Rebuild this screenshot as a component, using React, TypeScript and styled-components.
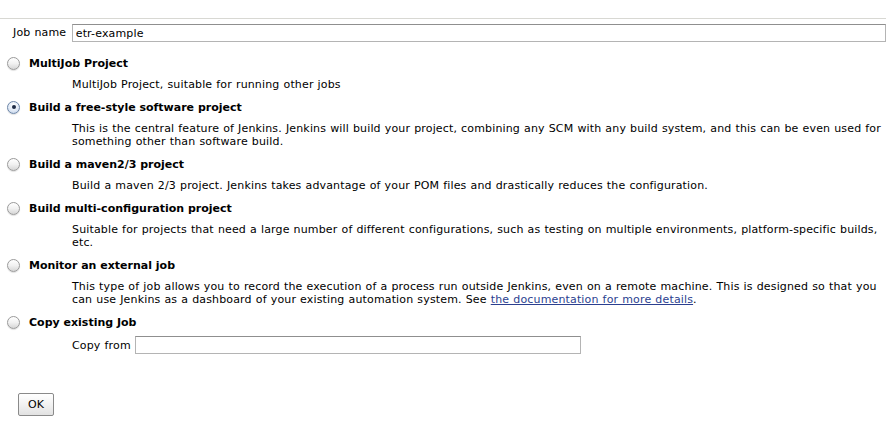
import React from "react";
import styled, { createGlobalStyle } from "styled-components";

const Global = createGlobalStyle`
	html, body {
		margin: 0;
		padding: 0;
		background: #fff;
	}
	body {
		font-family: "DejaVu Sans", Verdana, sans-serif;
		font-size: 11px;
		letter-spacing: 0.15px;
		word-spacing: 0.4px;
		color: #000;
	}
`;

const Form = styled.form`
	margin-top: 18px;
	border-top: 1px solid #d8d8d3;
	width: 100%;
	overflow: hidden;
`;

const NameRow = styled.div`
	display: flex;
	align-items: flex-start;
	margin-top: 5px;
`;

const NameLabel = styled.label`
	width: 72px;
	box-sizing: border-box;
	padding-left: 13px;
	padding-top: 2px;
	line-height: 13px;
`;

const TextInput = styled.input<{ $width?: number }>`
	box-sizing: border-box;
	height: 18px;
	width: ${(p) => (p.$width ? `${p.$width}px` : "calc(100% - 72px + 4px)")};
	margin: 0;
	padding: 0 3px;
	border: 1px solid #b4b4b4;
	border-top-color: #8f8f8f;
	font-family: inherit;
	font-size: 11px;
	letter-spacing: 0.15px;
	color: #000;
	outline: none;
	background: #fff;
`;

const Options = styled.div`
	display: flex;
	flex-direction: column;
	margin-top: 14px;
`;

const Option = styled.div`
	display: flex;
	flex-direction: column;
	margin-bottom: 9px;
`;

const OptionHead = styled.label`
	display: flex;
	align-items: center;
	height: 14px;
	padding-left: 7px;
	font-weight: bold;
	letter-spacing: 0;
	word-spacing: 0;
`;

const Radio = styled.span<{ $checked?: boolean }>`
	position: relative;
	box-sizing: border-box;
	width: 13px;
	height: 13px;
	margin-right: 9px;
	border-radius: 50%;
	border: 1px solid ${(p) => (p.$checked ? "#6d86a8" : "#9a9a9a")};
	background: ${(p) =>
		p.$checked
			? "radial-gradient(circle at 50% 30%, #ffffff 0%, #dfe8f5 60%, #b9cbe4 100%)"
			: "linear-gradient(#ffffff 0%, #f1f1f1 50%, #d6d6d6 100%)"};
	box-shadow: 0 1px 1px rgba(0, 0, 0, 0.12);

	&::after {
		content: "";
		display: ${(p) => (p.$checked ? "block" : "none")};
		position: absolute;
		left: 50%;
		top: 50%;
		width: 4px;
		height: 4px;
		margin: -2px 0 0 -2px;
		border-radius: 50%;
		background: #1d2b45;
	}
`;

const Description = styled.div`
	margin-top: 8px;
	padding-left: 72px;
	line-height: 13px;
`;

const DocLink = styled.a`
	color: #2b3f8f;
	text-decoration: underline;
`;

const CopyRow = styled.div`
	display: flex;
	align-items: center;
	gap: 4px;
	margin-top: 7px;
	padding-left: 72px;
`;

const Actions = styled.div`
	margin-top: 30px;
	padding-left: 18px;
`;

const OkButton = styled.button`
	box-sizing: border-box;
	width: 36px;
	height: 23px;
	padding: 0;
	border: 1px solid #8a8a8a;
	border-radius: 2px;
	background: linear-gradient(#ffffff 0%, #f2f2f2 50%, #e2e2e2 100%);
	font-family: inherit;
	font-size: 11px;
	color: #000;
`;

type JobType = {
	title: string;
	checked?: boolean;
	body?: React.ReactNode;
};

const types: JobType[] = [
	{ title: "MultiJob Project", body: "MultiJob Project, suitable for running other jobs" },
	{
		title: "Build a free-style software project",
		checked: true,
		body: "This is the central feature of Jenkins. Jenkins will build your project, combining any SCM with any build system, and this can be even used for something other than software build.",
	},
	{
		title: "Build a maven2/3 project",
		body: "Build a maven 2/3 project. Jenkins takes advantage of your POM files and drastically reduces the configuration.",
	},
	{
		title: "Build multi-configuration project",
		body: "Suitable for projects that need a large number of different configurations, such as testing on multiple environments, platform-specific builds, etc.",
	},
	{
		title: "Monitor an external job",
		body: (
			<>
				This type of job allows you to record the execution of a process run outside Jenkins, even on a remote machine. This is
				designed so that you can use Jenkins as a dashboard of your existing automation system. See{" "}
				<DocLink href="#">the documentation for more details</DocLink>.
			</>
		),
	},
];

export default function App() {
	return (
		<>
			<Global />
			<Form onSubmit={(e) => e.preventDefault()}>
				<NameRow>
					<NameLabel>Job name</NameLabel>
					<TextInput defaultValue="etr-example" />
				</NameRow>
				<Options>
					{types.map((t) => (
						<Option key={t.title}>
							<OptionHead>
								<Radio $checked={t.checked} />
								{t.title}
							</OptionHead>
							<Description>{t.body}</Description>
						</Option>
					))}
					<Option>
						<OptionHead>
							<Radio />
							Copy existing Job
						</OptionHead>
						<CopyRow>
							<span>Copy from</span>
							<TextInput $width={446} />
						</CopyRow>
					</Option>
				</Options>
				<Actions>
					<OkButton type="submit">OK</OkButton>
				</Actions>
			</Form>
		</>
	);
}
